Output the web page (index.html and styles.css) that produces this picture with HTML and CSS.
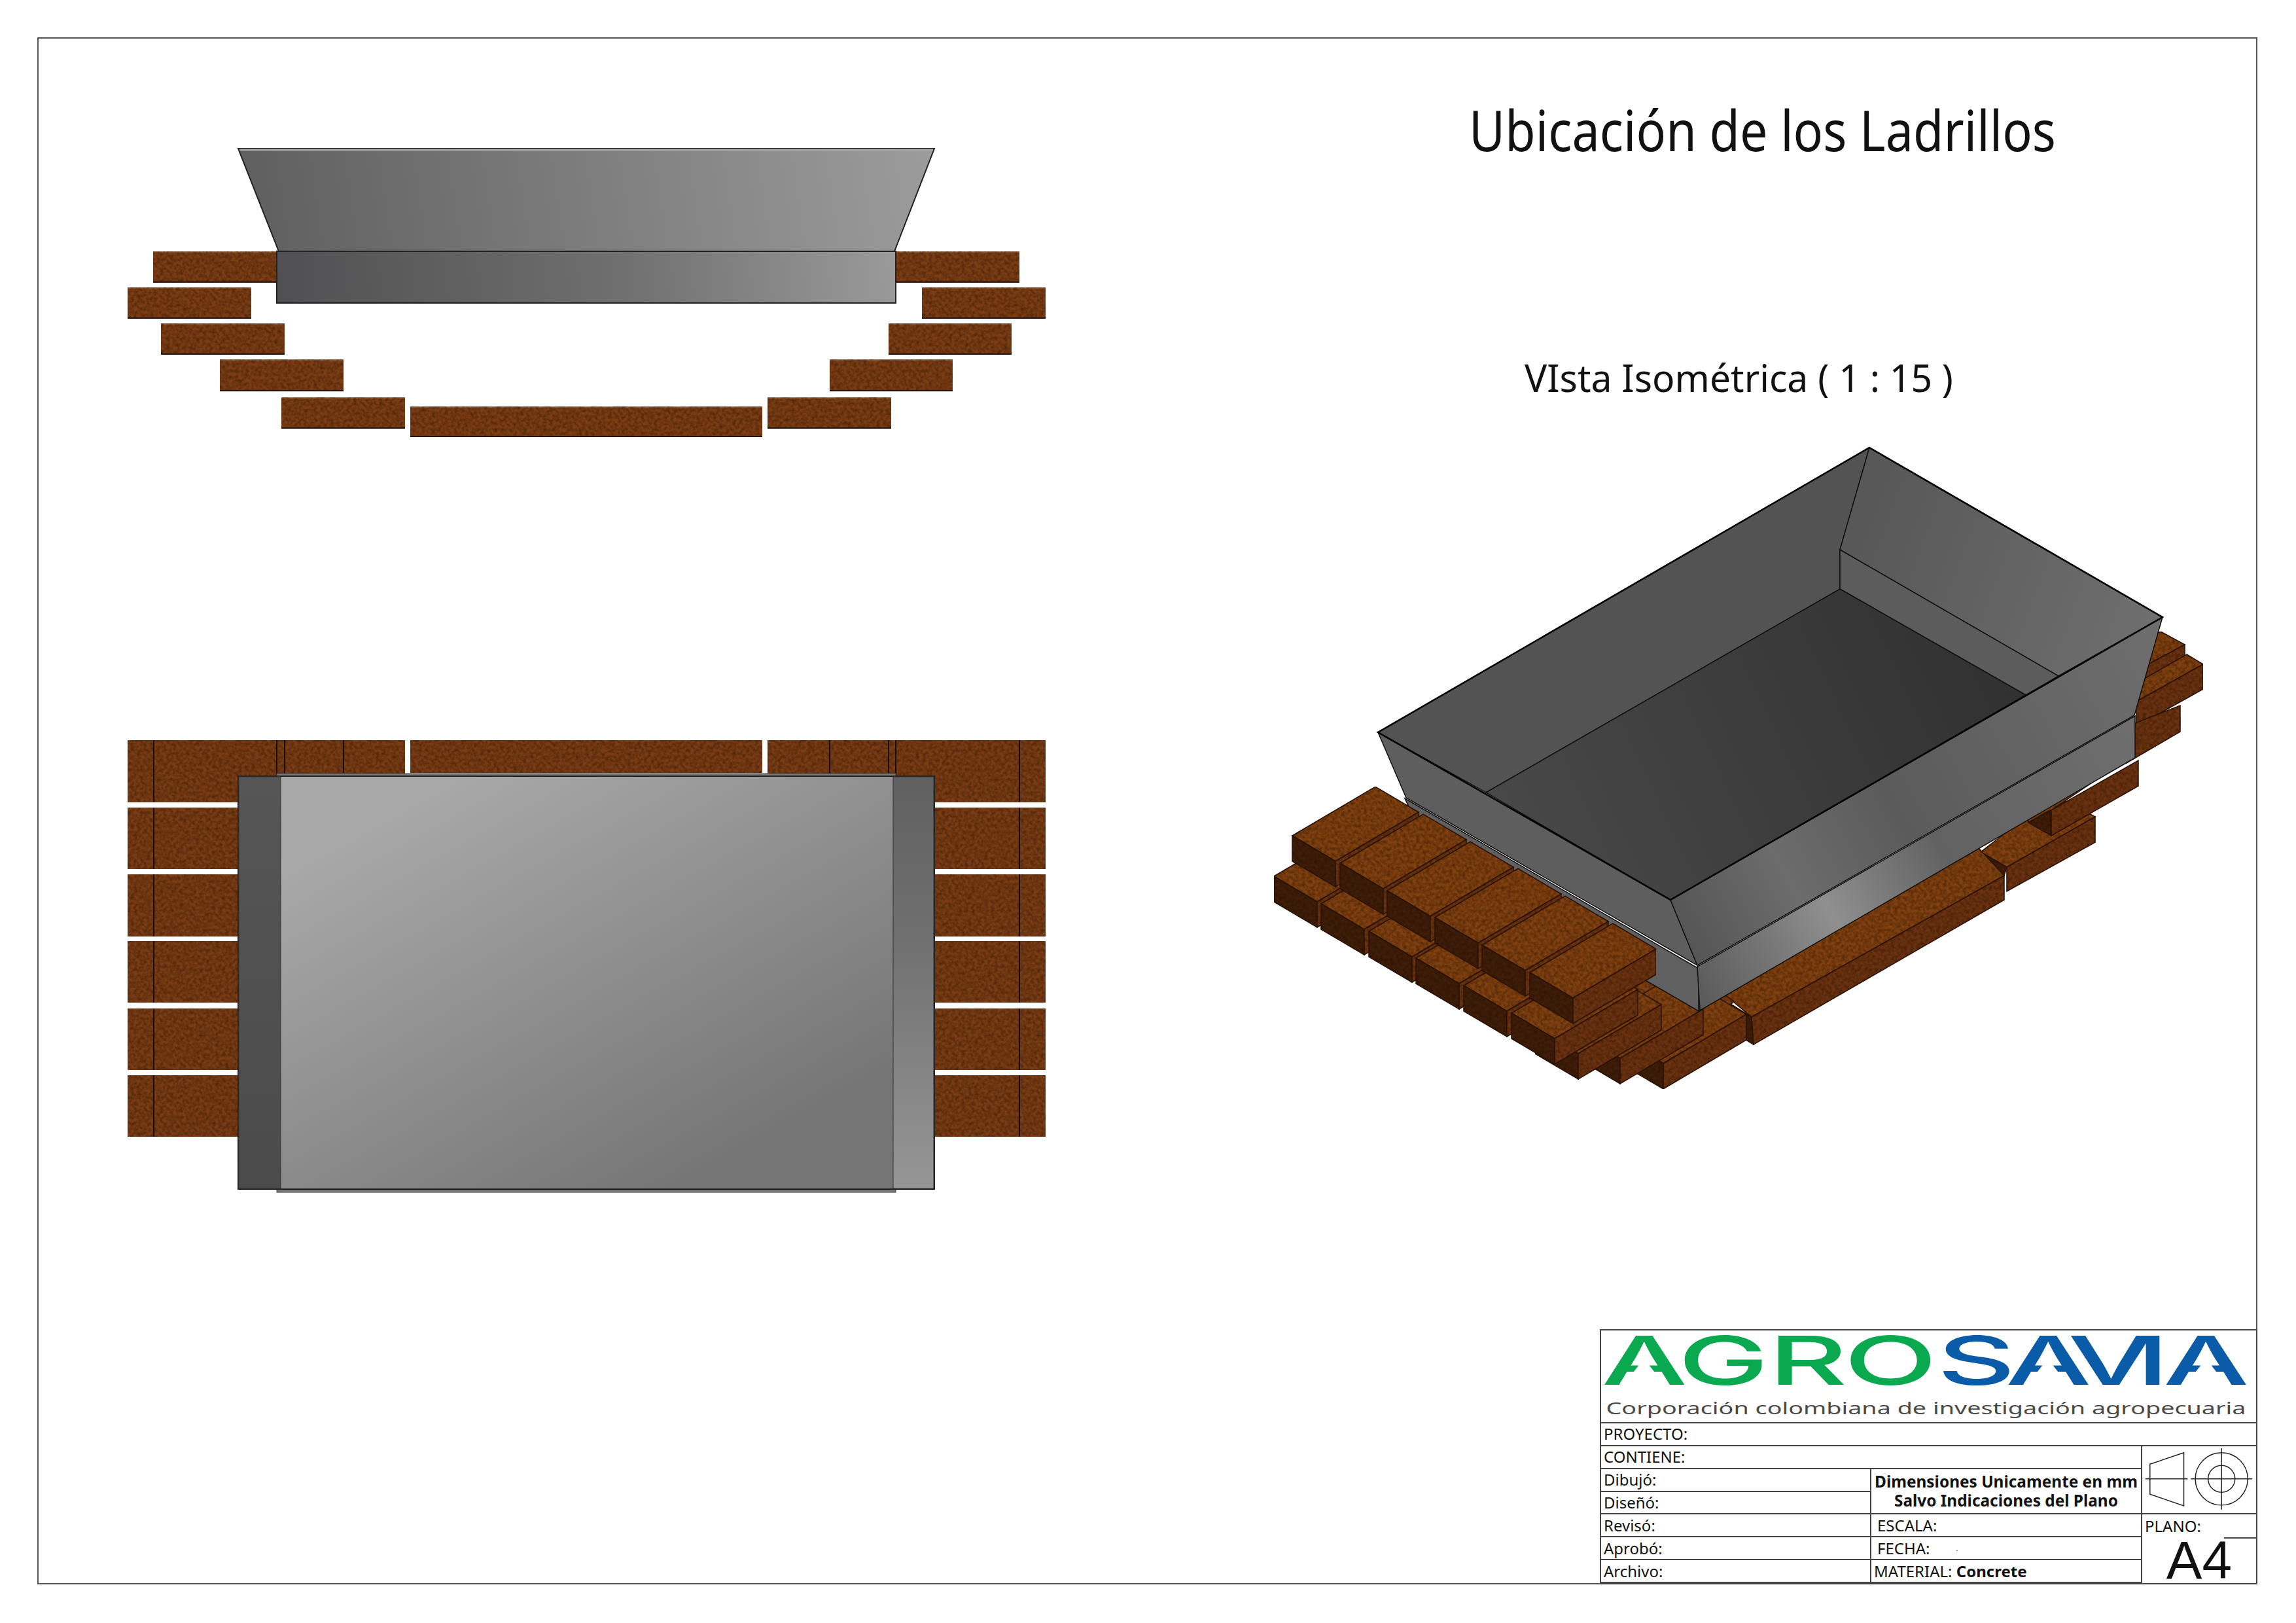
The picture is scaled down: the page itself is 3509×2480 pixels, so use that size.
FILE: index.html
```html
<!DOCTYPE html>
<html lang="es">
<head>
    <meta charset="UTF-8">
    <title>Ubicación de los Ladrillos</title>
    <link rel="stylesheet" href="styles.css">
</head>
<body>
<div class="sheet">
    <svg class="drawing" viewBox="0 0 3509 2480" xmlns="http://www.w3.org/2000/svg">
        <defs>
            <linearGradient id="brickFace" x1="0" y1="0" x2="0" y2="1">
                <stop offset="0" stop-color="#a98f7c"/>
                <stop offset="0.05" stop-color="#7c3d14"/>
                <stop offset="0.96" stop-color="#7c3d14"/>
                <stop offset="0.97" stop-color="#1c0e06"/>
                <stop offset="1" stop-color="#1c0e06"/>
            </linearGradient>
            <linearGradient id="topWall" gradientUnits="userSpaceOnUse" x1="364" y1="384" x2="1428" y2="227">
                <stop offset="0" stop-color="#5e5e5e"/>
                <stop offset="1" stop-color="#9c9c9c"/>
            </linearGradient>
            <linearGradient id="topBand" gradientUnits="userSpaceOnUse" x1="423" y1="463" x2="1369" y2="384">
                <stop offset="0" stop-color="#505052"/>
                <stop offset="0.55" stop-color="#6f6f6f"/>
                <stop offset="1" stop-color="#9a9a9a"/>
            </linearGradient>
            <linearGradient id="plate" gradientUnits="userSpaceOnUse" x1="700" y1="1187" x2="1050" y2="1817">
                <stop offset="0" stop-color="#a8a8a8"/>
                <stop offset="1" stop-color="#757575"/>
            </linearGradient>
            <linearGradient id="sideLeft" x1="0" y1="0" x2="0" y2="1">
                <stop offset="0" stop-color="#565656"/>
                <stop offset="1" stop-color="#4b4b4b"/>
            </linearGradient>
            <linearGradient id="sideRight" x1="0" y1="0" x2="0" y2="1">
                <stop offset="0" stop-color="#606060"/>
                <stop offset="0.4" stop-color="#707070"/>
                <stop offset="1" stop-color="#969696"/>
            </linearGradient>
            <linearGradient id="isoFloor" gradientUnits="userSpaceOnUse" x1="2300" y1="1250" x2="3050" y2="900">
                <stop offset="0" stop-color="#484848"/>
                <stop offset="1" stop-color="#303030"/>
            </linearGradient>
            <linearGradient id="isoBack" gradientUnits="userSpaceOnUse" x1="2850" y1="800" x2="3280" y2="960">
                <stop offset="0" stop-color="#585858"/>
                <stop offset="1" stop-color="#6e6e6e"/>
            </linearGradient>
            <linearGradient id="isoFront" gradientUnits="userSpaceOnUse" x1="2553" y1="1400" x2="3290" y2="1000">
                <stop offset="0" stop-color="#555555"/>
                <stop offset="0.22" stop-color="#6c6c6c"/>
                <stop offset="0.45" stop-color="#5b5b5b"/>
                <stop offset="1" stop-color="#6d6d6d"/>
            </linearGradient>
            <linearGradient id="isoBand" gradientUnits="userSpaceOnUse" x1="2598" y1="1510" x2="3264" y2="1125">
                <stop offset="0" stop-color="#5c5c5c"/>
                <stop offset="0.3" stop-color="#8f8f8f"/>
                <stop offset="0.55" stop-color="#626262"/>
                <stop offset="1" stop-color="#6e6e6e"/>
            </linearGradient>
            <filter id="grain" x="0" y="0" width="1" height="1" color-interpolation-filters="sRGB">
                <feTurbulence type="fractalNoise" baseFrequency="0.2" numOctaves="2" seed="7" result="noise"/>
                <feColorMatrix in="noise" type="matrix" values="0 0 0 0 0.12  0 0 0 0 0.05  0 0 0 0 0  0.9 0 0 0 -0.3" result="spots"/>
                <feComposite in="spots" in2="SourceAlpha" operator="in" result="clipped"/>
                <feMerge>
                    <feMergeNode in="SourceGraphic"/>
                    <feMergeNode in="clipped"/>
                </feMerge>
            </filter>
            <g id="isoBrick">
                <polygon class="iso-top" points="0,0 127,-75 193,-36 66,39"/>
                <polygon class="iso-dark" points="0,0 66,39 66,78 0,39"/>
                <polygon class="iso-side" points="66,39 193,-36 193,3 66,78"/>
            </g>
        </defs>

        <rect class="frame" x="58" y="58" width="3391" height="2362"/>

        <text class="title" x="2245" y="231" textLength="897" lengthAdjust="spacingAndGlyphs">Ubicación de los Ladrillos</text>
        <text class="subtitle" x="2330" y="599" textLength="655" lengthAdjust="spacingAndGlyphs">VIsta Isométrica ( 1 : 15 )</text>

        <!-- vista superior -->
        <g filter="url(#grain)">
            <rect class="brick" x="234" y="384" width="189" height="48"/>
            <rect class="brick" x="195" y="439" width="189" height="48"/>
            <rect class="brick" x="246" y="494" width="189" height="48"/>
            <rect class="brick" x="336" y="549" width="189" height="49"/>
            <rect class="brick" x="430" y="607" width="189" height="48"/>
            <rect class="brick" x="627" y="621" width="538" height="47"/>
            <rect class="brick" x="1173" y="607" width="189" height="48"/>
            <rect class="brick" x="1268" y="549" width="188" height="49"/>
            <rect class="brick" x="1358" y="494" width="188" height="48"/>
            <rect class="brick" x="1409" y="439" width="189" height="48"/>
            <rect class="brick" x="1368" y="384" width="190" height="48"/>
        </g>
        <polygon class="metal" fill="url(#topWall)" points="364,227 1428,227 1367,384 426,384"/>
        <line class="metal-hi" x1="366" y1="229" x2="1426" y2="229"/>
        <rect class="metal" fill="url(#topBand)" x="423" y="384" width="946" height="79"/>

        <!-- vista de frente -->
        <g filter="url(#grain)">
            <rect class="brick-flat" x="195" y="1131" width="424" height="95"/>
            <rect class="brick-flat" x="627" y="1131" width="538" height="50"/>
            <rect class="brick-flat" x="1173" y="1131" width="425" height="95"/>
            <rect class="brick-flat" x="195" y="1234" width="175" height="94"/>
            <rect class="brick-flat" x="195" y="1336" width="175" height="95"/>
            <rect class="brick-flat" x="195" y="1438" width="175" height="94"/>
            <rect class="brick-flat" x="195" y="1541" width="175" height="94"/>
            <rect class="brick-flat" x="195" y="1643" width="175" height="94"/>
            <rect class="brick-flat" x="1420" y="1234" width="178" height="94"/>
            <rect class="brick-flat" x="1420" y="1336" width="178" height="95"/>
            <rect class="brick-flat" x="1420" y="1438" width="178" height="94"/>
            <rect class="brick-flat" x="1420" y="1541" width="178" height="94"/>
            <rect class="brick-flat" x="1420" y="1643" width="178" height="94"/>
        </g>
        <path class="joint" d="M235 1131V1226M235 1234V1328M235 1336V1431M235 1438V1532M235 1541V1635M235 1643V1737M423 1131V1187M435 1131V1187M525 1131V1181M1268 1131V1181M1358 1131V1181M1369 1131V1187M1558 1131V1226M1558 1234V1328M1558 1336V1431M1558 1438V1532M1558 1541V1635M1558 1643V1737"/>
        <rect class="lip" x="423" y="1182" width="946" height="640"/>
        <rect class="metal" fill="url(#plate)" x="364" y="1186" width="1064" height="631"/>
        <rect class="strip" fill="url(#sideLeft)" x="365" y="1187" width="64" height="629"/>
        <rect class="strip" fill="url(#sideRight)" x="1365" y="1187" width="62" height="629"/>

        <!-- vista isométrica: ladrillos detrás -->
        <g filter="url(#grain)">
            <polygon class="iso-top" points="3302,965 3339,985 3270,1022 3240,1000"/>
            <polygon class="iso-side" points="3339,985 3339,1025 3270,1062 3270,1022"/>
            <polygon class="iso-top" points="3342,1000 3367,1015 3265,1072 3240,1058"/>
            <polygon class="iso-side" points="3367,1015 3367,1053 3265,1110 3265,1072"/>
            <polygon class="iso-side" points="3250,1110 3332,1078 3332,1118 3250,1166"/>
            <polygon class="iso-top" points="3027,1302 3067,1325 3202,1248 3140,1215"/>
            <polygon class="iso-side" points="3067,1325 3202,1248 3202,1287 3067,1362"/>
            <polygon class="iso-dark" points="3013,1308 3027,1302 3067,1325 3063,1338"/>
            <polygon class="iso-top" points="3100,1257 3135,1238 3250,1160 3100,1200"/>
            <polygon class="iso-dark" points="3100,1257 3133,1238 3135,1277"/>
            <polygon class="iso-side" points="3135,1238 3268,1162 3268,1201 3135,1277"/>
            <polygon class="iso-top" points="2600,1490 2677,1554 3063,1338 3000,1270"/>
            <polygon class="iso-dark" points="2630,1525 2677,1554 2680,1596 2640,1572"/>
            <polygon class="iso-side" points="2677,1554 3063,1338 3063,1375 2680,1596"/>
            <polygon class="iso-top" points="2440,1500 2600,1580 2650,1530 2560,1470"/>
            <use href="#isoBrick" x="2476" y="1586"/>
            <use href="#isoBrick" x="2410" y="1578"/>
            <use href="#isoBrick" x="2346" y="1571"/>
        </g>

        <!-- tolva -->
        <polygon class="iso-line" fill="#606060" points="2147,1220 2596,1480 2596,1545 2190,1310"/>
        <polygon class="iso-line" fill="url(#isoBand)" points="2594,1477 3263,1094 3263,1158 2598,1544"/>
        <polygon class="iso-line" fill="#5e5e5e" points="2106,1119 2553,1375 2594,1475 2149,1219"/>
        <polygon class="iso-line" fill="url(#isoFront)" points="2553,1375 3305,943 3262,1093 2594,1475"/>
        <polygon class="iso-line" fill="#535353" points="2857,684 2812,840 2812,900 2271,1211 2106,1119"/>
        <polygon class="iso-line" fill="url(#isoBack)" points="2857,684 3305,943 3146,1033 2812,840"/>
        <polygon class="iso-line" fill="#5c5c5c" points="2812,840 3146,1033 3096,1062 2812,900"/>
        <polygon class="iso-line" fill="url(#isoFloor)" points="2812,900 3096,1062 2553,1375 2271,1211"/>
        <polygon class="iso-rim" points="2857,684 3305,943 2553,1375 2106,1119"/>

        <!-- ladrillos delante -->
        <g filter="url(#grain)">
            <use href="#isoBrick" x="1947" y="1339"/>
            <use href="#isoBrick" x="2019" y="1381"/>
            <use href="#isoBrick" x="2092" y="1423"/>
            <use href="#isoBrick" x="2164" y="1464"/>
            <use href="#isoBrick" x="2237" y="1506"/>
            <use href="#isoBrick" x="2310" y="1548"/>
            <use href="#isoBrick" x="1975" y="1277"/>
            <use href="#isoBrick" x="2048" y="1319"/>
            <use href="#isoBrick" x="2120" y="1361"/>
            <use href="#isoBrick" x="2193" y="1402"/>
            <use href="#isoBrick" x="2265" y="1444"/>
            <use href="#isoBrick" x="2338" y="1486"/>
        </g>
    </svg>

    <div class="block">
        <div class="cell wide logo">
            <svg viewBox="0 0 1000 140" xmlns="http://www.w3.org/2000/svg">
                <g transform="scale(1.8 1)">
                    <text class="logo-word logo-green" x="0 65 142 206" y="83">AGRO</text>
                    <text class="logo-word logo-blue" x="285 343 396 454 477" y="83">SAVIA</text>
                </g>
                <polygon class="logo-cut" points="65,43 97,84 33,84"/>
                <polygon class="logo-cut" points="682,43 714,84 650,84"/>
                <polygon class="logo-cut" points="924,43 956,84 892,84"/>
                <text class="logo-sub" x="7" y="128" textLength="978" lengthAdjust="spacingAndGlyphs">Corporación colombiana de investigación agropecuaria</text>
            </svg>
        </div>
        <div class="cell wide">PROYECTO:</div>
        <div class="cell double">CONTIENE:</div>
        <div class="cell symbol">
            <svg viewBox="0 0 174 105" xmlns="http://www.w3.org/2000/svg">
                <path class="sym" d="M63 10L10 28V75L63 93ZM3 51H69"/>
                <circle class="sym" cx="122" cy="51" r="41"/>
                <circle class="sym" cx="122" cy="51" r="21"/>
                <path class="sym" d="M74 51H170M122 3V99"/>
            </svg>
        </div>
        <div class="cell">Dibujó:</div>
        <div class="cell note"><b>Dimensiones Unicamente en mm</b><b>Salvo Indicaciones del Plano</b></div>
        <div class="cell">Diseñó:</div>
        <div class="cell">Revisó:</div>
        <div class="cell inset">ESCALA:</div>
        <div class="cell plano">PLANO:</div>
        <div class="cell">Aprobó:</div>
        <div class="cell inset">FECHA:<span class="speck">.</span></div>
        <div class="cell size">A4</div>
        <div class="cell">Archivo:</div>
        <div class="cell">MATERIAL:&nbsp;<b>Concrete</b></div>
    </div>
</div>
</body>
</html>
```

FILE: styles.css
```css
body {
    margin: 0;
    background: #fff;
    font-family: "Noto Sans", sans-serif;
    color: #111;
}
.sheet {
    display: grid;
    width: 3509px;
    height: 2480px;
    overflow: hidden;
}
.drawing {
    grid-area: 1 / 1;
    width: 3509px;
    height: 2480px;
}
.frame {
    fill: none;
    stroke: #555;
    stroke-width: 2;
}
.title,
.subtitle {
    font-family: "Noto Sans", sans-serif;
    fill: #111;
}
.title {
    font-size: 86px;
}
.subtitle {
    font-size: 58px;
}

.brick {
    fill: url(#brickFace);
}
.brick-flat {
    fill: #7a3c14;
}
.joint {
    fill: none;
    stroke: #1a0c06;
    stroke-width: 2;
}
.metal {
    stroke: #222;
    stroke-width: 2;
}
.metal-hi {
    stroke: #a8a8a8;
    stroke-width: 3;
}
.lip {
    fill: #777;
    stroke: #444;
    stroke-width: 1;
}
.strip {
    stroke: #333;
    stroke-width: 1;
}
.iso-top {
    fill: #80400f;
    stroke: #2a1206;
    stroke-width: 1.5;
}
.iso-side {
    fill: #6b3210;
    stroke: #2a1206;
    stroke-width: 1.5;
}
.iso-dark {
    fill: #3f1d09;
    stroke: #2a1206;
    stroke-width: 1.5;
}
.iso-line {
    stroke: #111;
    stroke-width: 1.5;
}
.iso-rim {
    fill: none;
    stroke: #000;
    stroke-width: 2.5;
}

/* cajetin */
.block {
    grid-area: 1 / 1;
    align-self: start;
    justify-self: start;
    margin: 2031px 0 0 2445px;
    width: 1005px;
    height: 390px;
    box-sizing: border-box;
    display: grid;
    grid-template-columns: 413px 414px 1fr;
    grid-template-rows: 142px repeat(7, 1fr);
    background: #fff;
    border: 2px solid #444;
    font-size: 24px;
    line-height: 1;
}
.cell {
    display: flex;
    align-items: center;
    padding-left: 4px;
    border-right: 2px solid #444;
    border-bottom: 2px solid #444;
    white-space: nowrap;
}
.cell b {
    font-weight: 700;
}
.wide {
    grid-column: 1 / -1;
    border-right: 0;
}
.double {
    grid-column: 1 / 3;
}
.inset {
    padding-left: 9px;
}
.logo {
    padding: 0;
}
.logo svg {
    width: 100%;
    height: 100%;
    overflow: visible;
}
.logo-word {
    font-family: "Inter", sans-serif;
    font-weight: 500;
    font-size: 103px;
}
.logo-green {
    fill: #0aa950;
}
.logo-blue {
    fill: #0b5ca8;
}
.logo-cut {
    fill: #fff;
}
.logo-sub {
    font-family: "Noto Sans", sans-serif;
    font-size: 25px;
    fill: #4a4a4a;
}
.symbol {
    grid-column: 3;
    grid-row: 3 / 6;
    padding: 0;
    border-right: 0;
}
.symbol svg {
    width: 100%;
    height: 100%;
}
.sym {
    fill: none;
    stroke: #222;
    stroke-width: 1.5;
}
.note {
    grid-column: 2;
    grid-row: 4 / 6;
    flex-direction: column;
    justify-content: center;
    gap: 5px;
    padding: 0;
    font-size: 24.4px;
}
.plano {
    border-right: 0;
    border-bottom: 0;
}
.size {
    grid-column: 3;
    grid-row: 7 / 9;
    justify-content: center;
    padding: 0;
    border-right: 0;
    border-bottom: 0;
    font-size: 82px;
    line-height: 0.8;
    font-family: "Liberation Sans", sans-serif;
    background: linear-gradient(#444, #444) top right / 49px 2px no-repeat;
}
.speck {
    margin-left: 40px;
    font-size: 10px;
}
```
